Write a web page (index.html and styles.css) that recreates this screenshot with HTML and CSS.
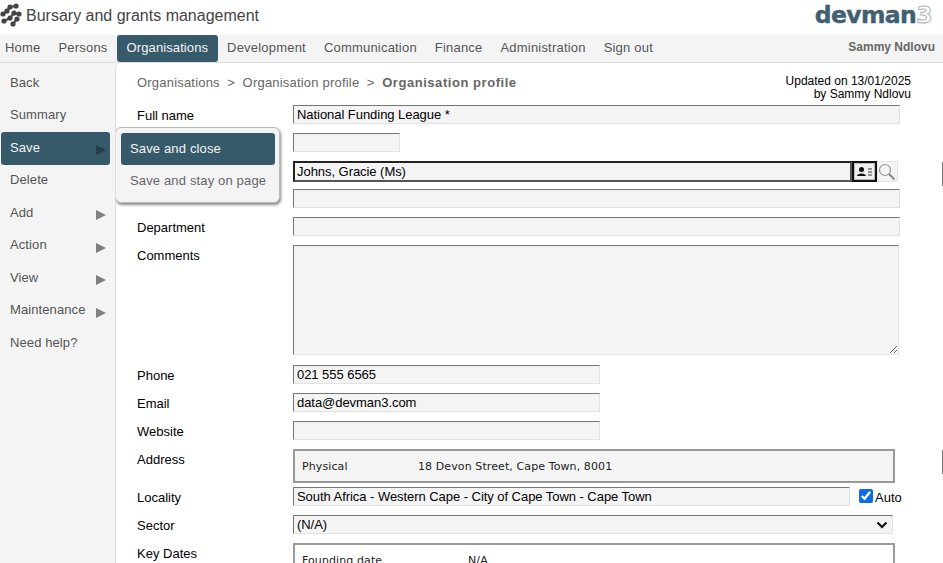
FILE: index.html
```html
<html lang="en">
<head>
  <meta charset="UTF-8" />
  <title>Bursary and grants management</title>
  <link rel="stylesheet" href="styles.css">
</head>
<body>
  <div id="top-bar">
    <svg class="app-icon" width="22" height="26" viewBox="0 0 22 26">
      <g fill="none" stroke="#4a4a4a" stroke-width="2.200">
        <path d="M3 13 L7 10 L10 6 L16 5"/>
        <path d="M4 20 L10 17 L14 12 L19 13"/>
        <path d="M13 23 L17 18"/>
      </g>
      <g fill="#444">
        <circle cx="16" cy="5" r="2.600"/>
        <circle cx="10" cy="6" r="2.600"/>
        <circle cx="7" cy="10" r="2.600"/>
        <circle cx="3" cy="13" r="2.600"/>
        <circle cx="19" cy="13" r="2.600"/>
        <circle cx="14" cy="12" r="2.600"/>
        <circle cx="10" cy="17" r="2.600"/>
        <circle cx="4" cy="20" r="2.600"/>
        <circle cx="17" cy="18" r="2.600"/>
        <circle cx="13" cy="23" r="2.600"/>
      </g>
    </svg>
    <div class="app-title">Bursary and grants management</div>
    <div class="logo">devman<span class="logo-three">3</span></div>
  </div>

  <div id="nav-bar">
    <a class="nav-item">Home</a>
    <a class="nav-item">Persons</a>
    <a class="nav-item active">Organisations</a>
    <a class="nav-item">Development</a>
    <a class="nav-item">Communication</a>
    <a class="nav-item">Finance</a>
    <a class="nav-item">Administration</a>
    <a class="nav-item">Sign out</a>
    <div class="nav-user">Sammy Ndlovu</div>
  </div>

  <div id="page">
    <ul id="side-menu">
      <li>Back</li>
      <li>Summary</li>
      <li class="active">Save<span class="arrow"></span></li>
      <li>Delete</li>
      <li>Add<span class="arrow"></span></li>
      <li>Action<span class="arrow"></span></li>
      <li>View<span class="arrow"></span></li>
      <li>Maintenance<span class="arrow"></span></li>
      <li>Need help?</li>
    </ul>

    <div id="main">
      <div class="head-row">
        <div class="crumbs">
          <span>Organisations</span><span class="sep">&gt;</span><span>Organisation profile</span><span class="sep">&gt;</span><b>Organisation profile</b>
        </div>
        <div class="updated">Updated on 13/01/2025<br>by Sammy Ndlovu</div>
      </div>

      <div class="form">
        <div class="row"><label>Full name</label><div class="field w-full">National Funding League *</div></div>
        <div class="row"><label></label><div class="field w-short"></div></div>
        <div class="row row-contact">
          <label></label>
          <div class="field contact">Johns, Gracie (Ms)</div>
          <div class="card-btn">
            <svg width="20" height="14" viewBox="0 0 20 14">
              <circle cx="6.500" cy="4.500" r="2.500" fill="#111"/>
              <path d="M2 11 C2 7.500 11 7.500 11 11 Z" fill="#111"/>
              <path d="M13 4 H17 M13 7 H17 M13 10 H17" stroke="#333" stroke-width="1.200"/>
            </svg>
          </div>
          <div class="search-btn">
            <svg width="18" height="18" viewBox="0 0 18 18" fill="none">
              <circle cx="7" cy="7" r="5.500" stroke="#999" stroke-width="1.200"/>
              <path d="M11 11 L16.500 16.500" stroke="#888" stroke-width="2"/>
            </svg>
          </div>
        </div>
        <div class="row"><label></label><div class="field w-full"></div></div>
        <div class="row"><label>Department</label><div class="field w-full"></div></div>
        <div class="row row-comments"><label>Comments</label><textarea class="comments"></textarea></div>
        <div class="row"><label>Phone</label><div class="field w-mid">021 555 6565</div></div>
        <div class="row"><label>Email</label><div class="field w-mid">data@devman3.com</div></div>
        <div class="row"><label>Website</label><div class="field w-mid"></div></div>
        <div class="row row-address">
          <label>Address</label>
          <div class="panel address"><span class="panel-key">Physical</span><span>18 Devon Street, Cape Town, 8001</span></div>
        </div>
        <div class="row">
          <label>Locality</label>
          <div class="field w-locality">South Africa - Western Cape - City of Cape Town - Cape Town</div>
          <input class="auto-check" type="checkbox" checked><span class="auto-label">Auto</span>
        </div>
        <div class="row">
          <label>Sector</label>
          <div class="field w-sector">(N/A)
            <svg class="chevron" width="12" height="8" viewBox="0 0 12 8" fill="none"><path d="M1.500 1.500 L6 6 L10.500 1.500" stroke="#111" stroke-width="2.200"/></svg>
          </div>
        </div>
        <div class="row row-dates">
          <label>Key Dates</label>
          <div class="panel dates"><span class="panel-key dates-key">Founding date</span><span>N/A</span></div>
        </div>
      </div>

      <div id="save-popup">
        <div class="popup-item active">Save and close</div>
        <div class="popup-item">Save and stay on page</div>
      </div>
    </div>
  </div>

  <div class="edge-mark mark-one"></div>
  <div class="edge-mark mark-two"></div>
</body>
</html>
```
FILE: styles.css
```css
* {
  box-sizing: border-box;
}

body {
  font-family: Arial, "Liberation Sans", sans-serif;
  margin: 0;
  padding: 0;
  background-color: #fff;
  color: #000;
  height: 100vh;
  overflow: hidden;
  font-size: 13px;
}

#top-bar {
  height: 35px;
  display: flex;
  align-items: center;
}

.app-icon {
  margin-top: -8px;
  flex-shrink: 0;
}

.app-title {
  font-size: 16px;
  color: #444;
  margin-left: 4px;
  margin-top: -4px;
}

.logo {
  margin-left: auto;
  margin-right: 11px;
  margin-top: -6px;
  font-family: "DejaVu Sans", sans-serif;
  font-weight: bold;
  font-size: 23.500px;
  letter-spacing: -0.6px;
  color: #3f6070;
  -webkit-text-stroke: 0.4px #3f6070;
}

.logo-three {
  color: #fff;
  -webkit-text-stroke: 1px #a9b4ba;
}

#nav-bar {
  height: 28px;
  display: flex;
  background: #f4f4f4;
  border-bottom: 1px solid #ddd;
}

.nav-item {
  padding: 5px 9px 0 9px;
  height: 27px;
  color: #555;
  font-size: 13px;
  letter-spacing: 0.2px;
}

.nav-item:first-child {
  padding-left: 5px;
}

.nav-item.active {
  background: #375a6a;
  color: #f4f4f4;
  border-radius: 3px;
  padding: 5px 10px 0 10px;
  letter-spacing: 0.1px;
}

.nav-user {
  margin-left: auto;
  margin-right: 8px;
  padding-top: 5px;
  font-size: 12px;
  font-weight: bold;
  color: #666;
}

#page {
  display: flex;
  height: 500px;
  background: #f4f4f4;
}

#side-menu {
  list-style-type: none;
  margin: 0;
  padding: 4px 0 0 1px;
  width: 115px;
  flex-shrink: 0;
}

#side-menu li {
  position: relative;
  height: 32.500px;
  width: 109px;
  padding: 7.500px 0 0 9px;
  color: #555;
  font-size: 13px;
  letter-spacing: 0.1px;
  border-radius: 3px;
}

#side-menu li.active {
  background: #375a6a;
  color: #f4f4f4;
}

.arrow {
  position: absolute;
  right: 4px;
  top: 13px;
  border-left: 10px solid #808080;
  border-top: 5.500px solid transparent;
  border-bottom: 5.500px solid transparent;
}

li.active .arrow {
  border-left-color: #253f4c;
}

#main {
  position: relative;
  flex: 1;
  background: #fff;
  border-left: 1px solid #ddd;
  border-top-left-radius: 5px;
  padding: 0 0 0 21px;
  overflow: hidden;
}

.head-row {
  display: flex;
  height: 42px;
  padding-top: 12px;
}

.crumbs {
  font-size: 13px;
  color: #666;
  letter-spacing: 0.2px;
}

.sep {
  margin: 0 7.500px;
}

.crumbs b {
  letter-spacing: 0.55px;
}

.updated {
  margin-left: auto;
  margin-right: 32px;
  text-align: right;
  font-size: 12px;
  line-height: 13px;
}

.row {
  display: flex;
  height: 28px;
  align-items: flex-start;
}

.row label {
  width: 156px;
  flex-shrink: 0;
  padding-top: 3px;
  font-size: 13px;
}

.field {
  position: relative;
  height: 19px;
  background: #f4f4f4;
  border: 1px solid #e2e2e2;
  border-top-color: #767676;
  border-left-color: #767676;
  padding: 0 3px;
  font-size: 13px;
  letter-spacing: -0.05px;
  line-height: 17px;
  white-space: nowrap;
}

.w-full { width: 607px; }
.w-short { width: 107px; }
.w-mid { width: 307px; }
.w-locality { width: 557px; }
.w-sector { width: 600px; }

.contact {
  width: 559px;
  height: 21px;
  border: 2px solid #222;
  border-bottom-color: #555;
  border-right-color: #555;
  padding: 0 2px;
}

.card-btn {
  width: 25px;
  height: 21px;
  border: 2px solid #111;
  box-shadow: inset 0 0 0 1px #bbb;
  display: flex;
  align-items: center;
  justify-content: center;
  background: #f0f0f0;
}

.search-btn {
  width: 21px;
  height: 21px;
  background: #f4f4f4;
  border: 1px solid #e6e6e6;
  display: flex;
  align-items: center;
  padding-left: 0;
}

.row-comments {
  height: 120px;
}

.comments {
  display: block;
  width: 606px;
  height: 110px;
  margin: 0;
  background: #f4f4f4;
  border: 1px solid #e2e2e2;
  border-top-color: #767676;
  border-left-color: #767676;
  border-radius: 0;
  padding: 2px;
}

.row-address {
  height: 38px;
}

.panel {
  background: #f4f4f4;
  border: 2px solid #999;
  font-family: "DejaVu Sans", sans-serif;
  font-size: 11px;
  letter-spacing: 0.1px;
  color: #222;
  display: flex;
  padding: 9px 0 0 7px;
  width: 602px;
}

.address {
  height: 34px;
}

.panel-key {
  width: 116px;
}

.dates {
  height: 60px;
  background: #fff;
}

.dates-key {
  width: 166px;
}

.auto-check {
  margin: 2px 0 0 9px;
  width: 14px;
  height: 14px;
  accent-color: #0b6ce8;
}

.auto-label {
  margin-left: 2px;
  padding-top: 3px;
  font-size: 13px;
}

.chevron {
  position: absolute;
  right: 4px;
  top: 5px;
}

#save-popup {
  position: absolute;
  left: -1px;
  top: 64px;
  width: 165px;
  height: 76px;
  background: #f4f4f4;
  border: 1px solid #bbb;
  border-radius: 6px;
  box-shadow: 1px 2px 3px #888;
  padding: 5px 4px 0 5px;
  z-index: 5;
}

.popup-item {
  height: 32px;
  padding: 8px 0 0 9px;
  color: #666;
  font-size: 13px;
  letter-spacing: 0.15px;
  border-radius: 3px;
}

.popup-item.active {
  background: #375a6a;
  color: #f4f4f4;
}

.edge-mark {
  position: fixed;
  right: 0;
  width: 1px;
  height: 24px;
  background: #777;
}

.mark-one { top: 162px; }
.mark-two { top: 450px; }
```
